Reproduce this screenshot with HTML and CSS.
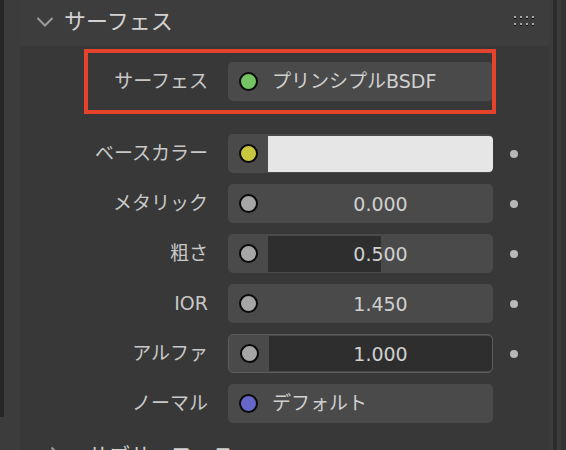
FILE: index.html
```html
<!DOCTYPE html>
<html lang="ja">
<head>
  <meta charset="UTF-8" />
  <meta name="viewport" content="width=device-width, initial-scale=1.0" />
  <title>サーフェス</title>
  <link rel="stylesheet" href="styles.css">
</head>
<body>
  <div class="page">
    <div class="edge"></div>
    <div class="gutter"></div>

    <div class="panel">
      <div class="panel-head">
        <svg class="chev" width="18" height="12" viewBox="0 0 18 12">
          <polyline points="1.5,2 9,9.5 16.5,2" fill="none" stroke="#9c9c9c" stroke-width="2" />
        </svg>
        <span class="panel-title">サーフェス</span>
        <svg class="grip" width="22" height="10" viewBox="0 0 22 10">
          <g fill="#111">
            <rect x="0" y="2" width="2" height="1" /><rect x="6" y="2" width="2" height="1" />
            <rect x="12" y="2" width="2" height="1" /><rect x="18" y="2" width="2" height="1" />
            <rect x="0" y="9" width="2" height="1" /><rect x="6" y="9" width="2" height="1" />
            <rect x="12" y="9" width="2" height="1" /><rect x="18" y="9" width="2" height="1" />
          </g>
          <g fill="#a8a8a8">
            <rect x="0" y="0" width="2" height="2" /><rect x="6" y="0" width="2" height="2" />
            <rect x="12" y="0" width="2" height="2" /><rect x="18" y="0" width="2" height="2" />
            <rect x="0" y="7" width="2" height="2" /><rect x="6" y="7" width="2" height="2" />
            <rect x="12" y="7" width="2" height="2" /><rect x="18" y="7" width="2" height="2" />
          </g>
        </svg>
      </div>

      <div class="panel-body">
        <div class="highlight">
          <div class="row row-hl">
            <div class="label">サーフェス</div>
            <div class="field">
              <div class="socket"><span class="dot green"></span></div>
              <div class="value-text">プリンシプルBSDF</div>
            </div>
          </div>
        </div>

        <div class="row">
          <div class="label">ベースカラー</div>
          <div class="field">
            <div class="socket"><span class="dot yellow"></span></div>
            <div class="swatch"></div>
          </div>
          <span class="key"></span>
        </div>

        <div class="row">
          <div class="label">メタリック</div>
          <div class="field">
            <div class="socket"><span class="dot gray"></span></div>
            <div class="slider">
              <div class="fill" style="width: 0%"></div>
              <span class="num">0.000</span>
            </div>
          </div>
          <span class="key"></span>
        </div>

        <div class="row">
          <div class="label">粗さ</div>
          <div class="field">
            <div class="socket"><span class="dot gray"></span></div>
            <div class="slider">
              <div class="fill" style="width: 50%"></div>
              <span class="num">0.500</span>
            </div>
          </div>
          <span class="key"></span>
        </div>

        <div class="row">
          <div class="label">IOR</div>
          <div class="field">
            <div class="socket"><span class="dot gray"></span></div>
            <div class="slider">
              <span class="num">1.450</span>
            </div>
          </div>
          <span class="key"></span>
        </div>

        <div class="row">
          <div class="label">アルファ</div>
          <div class="field active">
            <div class="socket"><span class="dot gray"></span></div>
            <div class="slider">
              <div class="fill" style="width: 100%"></div>
              <span class="num">1.000</span>
            </div>
          </div>
          <span class="key"></span>
        </div>

        <div class="row">
          <div class="label">ノーマル</div>
          <div class="field">
            <div class="socket"><span class="dot blue"></span></div>
            <div class="value-text">デフォルト</div>
          </div>
        </div>

        <div class="sub-head">
          <svg class="chev-right" width="10" height="16" viewBox="0 0 10 16">
            <polyline points="1.5,1.5 8,8 1.5,14.5" fill="none" stroke="#9c9c9c" stroke-width="2" />
          </svg>
          <span class="sub-title">サブサーフェス</span>
        </div>
      </div>
    </div>

    <div class="sidebar">
      <div class="s1"></div>
      <div class="s2"></div>
      <div class="s3"></div>
      <div class="s4"></div>
    </div>
  </div>
</body>
</html>
```

FILE: styles.css
```css
body {
  margin: 0;
  background: #3c3c3c;
  font-family: "DejaVu Sans", "Noto Sans CJK JP", sans-serif;
  color: #c8c8c8;
  overflow: hidden;
}
.page {
  display: flex;
  width: 566px;
  height: 450px;
  overflow: hidden;
}
.edge {
  width: 4px;
  height: 417px;
  background: #262626;
  flex-shrink: 0;
}
.gutter {
  width: 16px;
  flex-shrink: 0;
}
.panel {
  width: 529px;
  flex-shrink: 0;
  display: flex;
  flex-direction: column;
}
.panel-head {
  height: 46px;
  flex-shrink: 0;
  display: flex;
  align-items: center;
  padding-left: 16px;
  background: #3d3d3d;
}
.chev {
  display: block;
  margin-top: -3px;
}
.panel-title {
  margin-left: 10px;
  font-size: 22px;
  line-height: 46px;
  color: #d2d2d2;
  margin-top: -3px;
}
.grip {
  display: block;
  margin-left: auto;
  margin-right: 13px;
  margin-top: -5px;
}
.panel-body {
  flex: 1 0 auto;
  background: #383838;
  padding-top: 3px;
}
.highlight {
  margin-left: 64px;
  width: 404px;
  border: 4px solid #e5432b;
  padding: 9px 0;
  overflow: hidden;
}
.row {
  display: flex;
  align-items: center;
  height: 39px;
  margin-top: 11px;
}
.highlight + .row {
  margin-top: 20px;
}
.row-hl {
  margin-top: 0;
}
.label {
  width: 188px;
  text-align: right;
  font-size: 19px;
  line-height: 39px;
  flex-shrink: 0;
  white-space: nowrap;
}
.row-hl .label {
  width: 120px;
}
.field {
  margin-left: 20px;
  width: 265px;
  height: 39px;
  flex-shrink: 0;
  display: flex;
  align-items: center;
  background: #4a4a4a;
  border-radius: 5px;
  overflow: hidden;
  box-sizing: border-box;
}
.field.active {
  border: 1px solid #5c5c5c;
}
.socket {
  width: 40px;
  height: 100%;
  display: flex;
  align-items: center;
  justify-content: center;
  flex-shrink: 0;
}
.dot {
  display: block;
  width: 15px;
  height: 15px;
  flex-shrink: 0;
  border: 2px solid #0a0a0a;
  border-radius: 50%;
}
.green { background: #74c464; }
.yellow { background: #c9c63f; }
.gray { background: #a6a6a6; }
.blue { background: #6767c9; }
.value-text {
  font-size: 19px;
  line-height: 39px;
  color: #d0d0d0;
  padding-left: 4px;
  white-space: nowrap;
}
.swatch {
  flex: 1;
  height: 36px;
  margin-top: 1px;
  background: #e6e6e6;
  border-radius: 0 4px 4px 0;
}
.slider {
  flex: 1;
  height: 100%;
  position: relative;
  display: flex;
  align-items: center;
  justify-content: center;
}
.fill {
  position: absolute;
  left: 0;
  top: 2px;
  bottom: 1px;
  background: #2e2e2e;
}
.active .fill {
  top: 1px;
  bottom: 1px;
  border-radius: 0 4px 4px 0;
}
.num {
  position: relative;
  font-size: 19px;
  color: #d0d0d0;
}
.key {
  width: 8px;
  height: 8px;
  flex-shrink: 0;
  margin-left: 17px;
  border-radius: 50%;
  background: #b8b8b8;
}
.sub-head {
  display: flex;
  align-items: center;
  height: 46px;
  margin-top: 8px;
  padding-left: 30px;
}
.chev-right {
  display: block;
}
.sub-title {
  margin-left: 28px;
  font-size: 21px;
  color: #d2d2d2;
}
.sidebar {
  display: flex;
  flex: 1;
}
.s1 { width: 4px; background: #3b3b3b; }
.s2 { width: 4px; background: #2c2c2c; }
.s3 { width: 4px; background: #3b3b3b; }
.s4 { flex: 1; background: #333333; }
```
